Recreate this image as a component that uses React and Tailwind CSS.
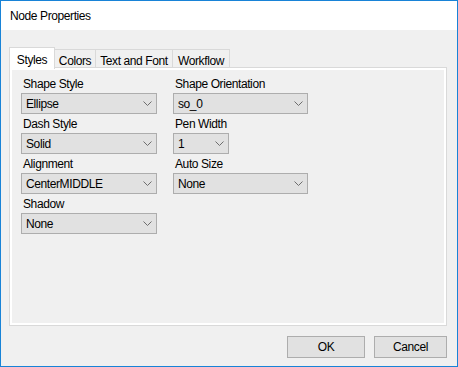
import React from 'react';

const font = { fontFamily: '"Liberation Sans", Arial, sans-serif' };

function Chevron() {
  return (
    <svg width="9" height="5" viewBox="0 0 9 5" className="shrink-0">
      <polyline points="0.5,0.5 4.5,4.5 8.5,0.5" fill="none" stroke="#6d6d6d" strokeWidth="1" />
    </svg>
  );
}

function Combo({ value, width = 'w-[136px]' }) {
  return (
    <div className={`${width} h-[21px] bg-[#e1e1e1] border border-[#adadad] flex items-center justify-between pl-[4px] pr-[4px]`}>
      <span className="leading-none">{value}</span>
      <Chevron />
    </div>
  );
}

function Field({ label, value, width }) {
  return (
    <div className="flex flex-col">
      <div className="h-[19px] leading-[21px] pl-[2px]">{label}</div>
      <Combo value={value} width={width} />
    </div>
  );
}

export default function App() {
  const tabs = [
    { name: 'Styles', w: 'w-[46px]', active: true },
    { name: 'Colors', w: 'w-[41px]' },
    { name: 'Text and Font', w: 'w-[77px]' },
    { name: 'Workflow', w: 'w-[57px]' },
  ];

  return (
    <div
      style={font}
      className="w-[458px] h-[367px] border border-[#1883d7] bg-[#f0f0f0] flex flex-col text-[12px] tracking-[-0.4px] text-black"
    >
      <div className="h-[29px] bg-white flex items-center pl-[9px] shrink-0">
        Node Properties
      </div>

      <div className="pt-[17px] pl-[8px] pr-[10px] flex flex-col">
        <div className="flex items-end h-[20px]">
          {tabs.map((t) =>
            t.active ? (
              <div
                key={t.name}
                className={`${t.w} h-[22px] -mb-[2px] relative z-10 bg-white border border-b-0 border-[#d9d9d9] flex items-start justify-center pt-[3px]`}
              >
                {t.name}
              </div>
            ) : (
              <div
                key={t.name}
                className={`${t.w} h-[18px] border-t border-r border-[#d9d9d9] bg-[#f0f0f0] flex items-start justify-center pt-[2px]`}
              >
                {t.name}
              </div>
            )
          )}
        </div>

        <div className="h-[259px] border border-[#d9d9d9]">
          <div className="h-full border-2 border-white pt-[4px] pl-[9px]">
            <div className="grid grid-cols-[136px_136px] gap-x-[16px]">
              <div className="flex flex-col">
                <Field label="Shape Style" value="Ellipse" />
                <Field label="Dash Style" value="Solid" />
                <Field label="Alignment" value="CenterMIDDLE" />
                <Field label="Shadow" value="None" />
              </div>
              <div className="flex flex-col">
                <Field label="Shape Orientation" value="so_0" width="w-[135px]" />
                <Field label="Pen Width" value="1" width="w-[56px]" />
                <Field label="Auto Size" value="None" width="w-[135px]" />
              </div>
            </div>
          </div>
        </div>

        <div className="flex justify-end gap-[9px] mt-[10px] pr-[0px]">
          <button className="w-[78px] h-[22px] bg-[#e1e1e1] border border-[#adadad] flex items-center justify-center">
            OK
          </button>
          <button className="w-[73px] h-[22px] bg-[#e1e1e1] border border-[#adadad] flex items-center justify-center">
            Cancel
          </button>
        </div>
      </div>
    </div>
  );
}
